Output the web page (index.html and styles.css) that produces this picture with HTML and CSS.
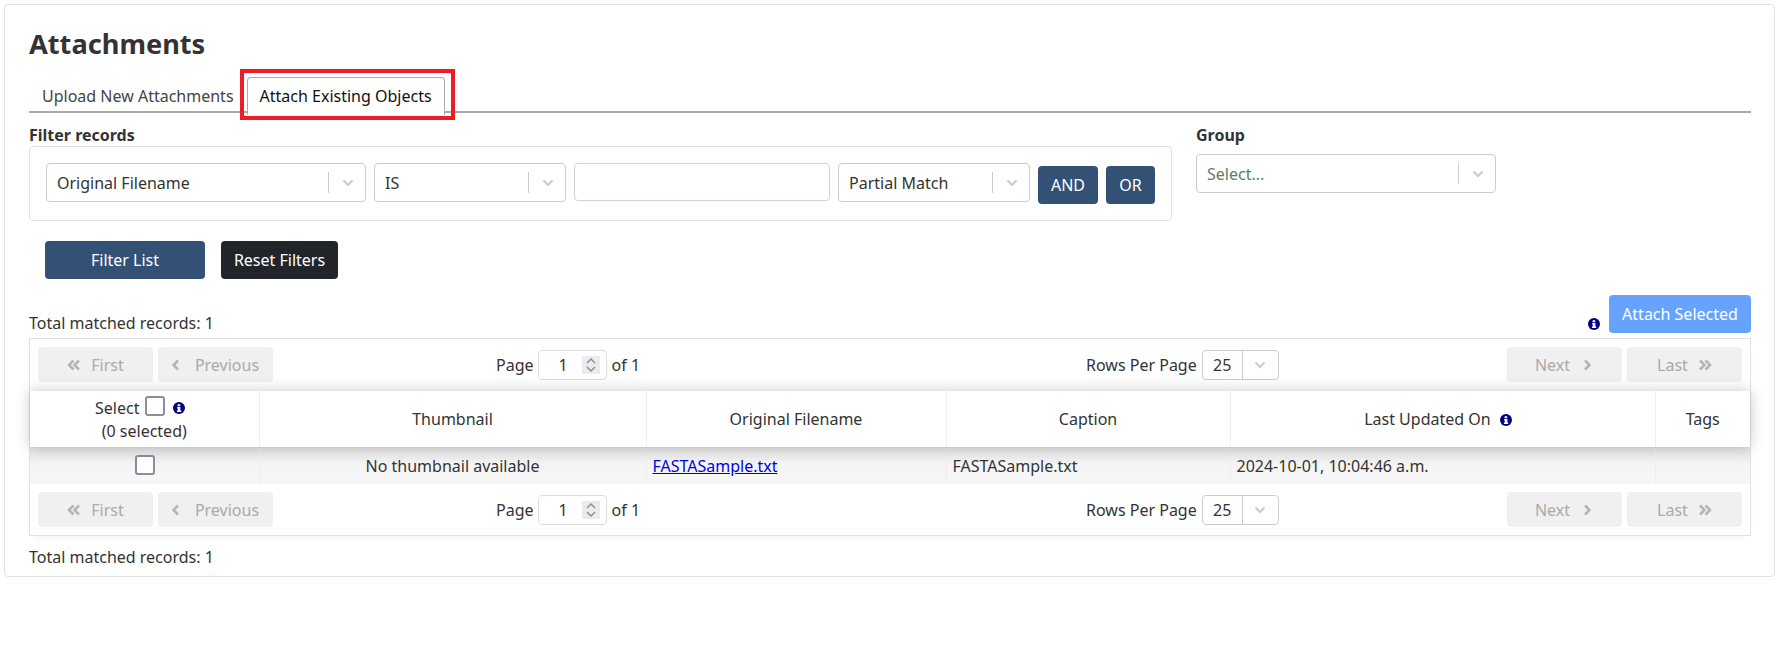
FILE: index.html
```html
<!DOCTYPE html>
<html lang="en">
<head>
  <meta charset="UTF-8">
  <meta name="viewport" content="width=device-width, initial-scale=1.0">
  <title>Attachments</title>
  <link rel="stylesheet" href="styles.css">
</head>
<body>
  <svg class="sprites" width="0" height="0">
    <symbol id="info" viewBox="0 0 12 12">
      <circle cx="6" cy="6" r="6" fill="#000080"/>
      <path d="M4.600 2.200h2.600v2H4.600zM4.200 5h3.200v3.400h.8V10H3.900V8.400h.9V6.600h-.6z" fill="#fff"/>
    </symbol>
    <symbol id="chev-down" viewBox="0 0 12 8">
      <path d="M1.500 1.500 6 6l4.500-4.500" fill="none" stroke="#ccc" stroke-width="2.200"/>
    </symbol>
    <symbol id="double-left" viewBox="0 0 14 12">
      <path d="M6.500 1.500 2 6l4.500 4.500M12 1.500 7.500 6l4.500 4.500" fill="none" stroke="currentColor" stroke-width="2.500"/>
    </symbol>
    <symbol id="double-right" viewBox="0 0 14 12">
      <path d="M2 1.500 6.500 6 2 10.500M7.500 1.500 12 6l-4.500 4.500" fill="none" stroke="currentColor" stroke-width="2.500"/>
    </symbol>
    <symbol id="single-left" viewBox="0 0 8 12">
      <path d="M6 1.500 1.500 6 6 10.500" fill="none" stroke="currentColor" stroke-width="2.500"/>
    </symbol>
    <symbol id="single-right" viewBox="0 0 8 12">
      <path d="M2 1.500 6.500 6 2 10.500" fill="none" stroke="currentColor" stroke-width="2.500"/>
    </symbol>
    <symbol id="spin" viewBox="0 0 18 18">
      <path d="M5 7l4-4 4 4M5 11l4 4 4-4" fill="none" stroke="#8a8a96" stroke-width="1.400"/>
    </symbol>
  </svg>

  <div class="card">
    <h1>Attachments</h1>

    <div class="tabs">
      <a class="tab">Upload New Attachments</a>
      <a class="tab active">Attach Existing Objects<span class="highlight"></span></a>
    </div>

    <div class="filter-row">
      <div class="filter-col">
        <label class="field-label">Filter records</label>
        <div class="filter-box">
          <div class="select sel-field"><span class="value">Original Filename</span><span class="sep"></span><svg class="chev"><use href="#chev-down"/></svg></div>
          <div class="select sel-op"><span class="value">IS</span><span class="sep"></span><svg class="chev"><use href="#chev-down"/></svg></div>
          <input class="text-input" type="text">
          <div class="select sel-op"><span class="value">Partial Match</span><span class="sep"></span><svg class="chev"><use href="#chev-down"/></svg></div>
          <button class="btn btn-blue btn-and">AND</button>
          <button class="btn btn-blue btn-or">OR</button>
        </div>
      </div>
      <div class="group-col">
        <label class="field-label">Group</label>
        <div class="select sel-group"><span class="value placeholder">Select...</span><span class="sep"></span><svg class="chev"><use href="#chev-down"/></svg></div>
      </div>
    </div>

    <div class="filter-actions">
      <button class="btn btn-blue btn-filter">Filter List</button>
      <button class="btn btn-dark">Reset Filters</button>
    </div>

    <div class="summary-row">
      <span>Total matched records: 1</span>
      <div class="attach-wrap">
        <svg class="info"><use href="#info"/></svg>
        <button class="btn btn-attach">Attach Selected</button>
      </div>
    </div>

    <div class="table-box">
      <div class="pager">
        <div class="pager-side">
          <button class="page-btn"><svg class="pg-ico wide"><use href="#double-left"/></svg>First</button>
          <button class="page-btn"><svg class="pg-ico single"><use href="#single-left"/></svg>Previous</button>
        </div>
        <div class="pager-center">
          <span class="page-info">Page <span class="page-input"><input type="text" value="1"><svg class="spin"><use href="#spin"/></svg></span> of 1</span>
          <span class="rows-info">Rows Per Page
            <span class="rows-select"><span class="rows-val">25</span><span class="rows-arrow"><svg class="chev"><use href="#chev-down"/></svg></span></span>
          </span>
        </div>
        <div class="pager-side">
          <button class="page-btn">Next<svg class="pg-ico after single"><use href="#single-right"/></svg></button>
          <button class="page-btn">Last<svg class="pg-ico wide after"><use href="#double-right"/></svg></button>
        </div>
      </div>

      <table class="records">
        <thead>
          <tr>
            <th class="col-select">
              <div class="select-head">Select <input class="check check-head" type="checkbox"> <svg class="info"><use href="#info"/></svg></div>
              <div>(0 selected)</div>
            </th>
            <th class="col-thumb">Thumbnail</th>
            <th class="col-file">Original Filename</th>
            <th class="col-caption">Caption</th>
            <th class="col-updated">Last Updated On <svg class="info info-th"><use href="#info"/></svg></th>
            <th class="col-tags">Tags</th>
          </tr>
        </thead>
        <tbody>
          <tr>
            <td class="center"><input class="check check-row" type="checkbox"></td>
            <td class="center">No thumbnail available</td>
            <td><a href="#">FASTASample.txt</a></td>
            <td>FASTASample.txt</td>
            <td>2024-10-01, 10:04:46 a.m.</td>
            <td></td>
          </tr>
        </tbody>
      </table>

      <div class="pager pager-bottom">
        <div class="pager-side">
          <button class="page-btn"><svg class="pg-ico wide"><use href="#double-left"/></svg>First</button>
          <button class="page-btn"><svg class="pg-ico single"><use href="#single-left"/></svg>Previous</button>
        </div>
        <div class="pager-center">
          <span class="page-info">Page <span class="page-input"><input type="text" value="1"><svg class="spin"><use href="#spin"/></svg></span> of 1</span>
          <span class="rows-info">Rows Per Page
            <span class="rows-select"><span class="rows-val">25</span><span class="rows-arrow"><svg class="chev"><use href="#chev-down"/></svg></span></span>
          </span>
        </div>
        <div class="pager-side">
          <button class="page-btn">Next<svg class="pg-ico after single"><use href="#single-right"/></svg></button>
          <button class="page-btn">Last<svg class="pg-ico wide after"><use href="#double-right"/></svg></button>
        </div>
      </div>
    </div>

    <div class="summary-bottom">Total matched records: 1</div>
  </div>
</body>
</html>
```

FILE: styles.css
```css
* { box-sizing: border-box; }
body { font-family: "Noto Sans", sans-serif; font-size: 16px; line-height: 1.5; color: #333; background: #fff; margin: 0; padding: 4px 8px 0 4px; }
.sprites { position: absolute; }
.card { border: 1px solid #dee2e6; border-radius: 4px; padding: 20px 23px 7px 24px; height: 573px; }
h1 { font-size: 27.2px; font-weight: 700; line-height: 38px; margin: 0 0 10px; }

.tabs { display: flex; border-bottom: 2px solid #aaa; height: 40px; padding-top: 4px; }
.tab { position: relative; padding: 6px 12px; height: 36px; color: #444; border: 1px solid transparent; white-space: nowrap; }
.tab.active { color: #111; background: #fff; border-color: #aaa; border-bottom-color: #fff; border-radius: 4px 4px 0 0; height: 38px; }
.highlight { position: absolute; left: -8px; right: -11px; top: -9px; height: 51px; border: 4px solid #ee1c25; }

.filter-row { display: flex; margin-top: 11px; }
.filter-col { width: 1143px; }
.group-col { margin-left: 24px; }
.field-label { display: block; font-weight: 700; line-height: 22px; }
.filter-box { display: flex; align-items: flex-start; gap: 8px; height: 75px; padding: 16px 16px; border: 1px solid #dee2e6; border-radius: 4px; }

.select { display: flex; align-items: center; height: 39px; border: 1px solid #ccc; border-radius: 4px; padding-left: 10px; background: #fff; }
.select .value { flex: 1; }
.select .placeholder { color: #5f7a6a; }
.sep { width: 1px; height: 21px; background: #ccc; }
.chev { width: 12px; height: 8px; margin: 0 11px 0 13px; }
.sel-field { width: 320px; }
.sel-op { width: 192px; }
.sel-group { width: 300px; margin-top: 8px; }
.text-input { width: 256px; height: 38px; border: 1px solid #ced4da; border-radius: 4px; }

.btn { font-family: inherit; font-size: 16px; color: #fff; border: 1px solid transparent; border-radius: 4px; height: 38px; padding: 0; cursor: pointer; }
.btn-blue { background: #335175; }
.btn-dark { background: #212529; width: 117px; }
.btn-and { width: 60px; margin-top: 3px; }
.btn-or { width: 49px; margin-top: 3px; }
.btn-filter { width: 160px; }
.btn-attach { background: #66a3ff; width: 142px; }

.filter-actions { display: flex; gap: 16px; margin-top: 20px; padding-left: 16px; }

.summary-row { display: flex; justify-content: space-between; margin-top: 16px; height: 43px; }
.summary-row > span { margin-top: 16px; }
.attach-wrap { display: flex; align-items: flex-start; gap: 9px; }
.attach-wrap .info { align-self: flex-end; margin-bottom: 8px; }
.info { width: 12px; height: 12px; vertical-align: -1px; }
.info-th { margin-left: 5px; }

.table-box { border: 1px solid #dee2e6; box-shadow: 0 6px 8px -6px rgba(0, 0, 0, .08); }
.pager { display: flex; justify-content: space-between; align-items: center; height: 52px; padding: 0 8px 1px 8px; }
.pager-bottom { height: 51px; padding-bottom: 0; }
.pager-side { display: flex; gap: 5px; }
.pager-center { flex: 1; display: flex; align-items: center; padding-left: 223px; }
.page-info { display: flex; align-items: center; gap: 4px; }
.page-input { margin-right: 1px; }
.rows-info { display: flex; align-items: center; gap: 5px; margin-left: 446px; }
.page-btn { display: flex; align-items: center; justify-content: center; width: 115px; height: 35px; font-family: inherit; font-size: 16px; color: #aaa; background: #f0f0f0; border: none; border-radius: 4px; }
.pg-ico { width: 8px; height: 12px; margin-right: 10px; color: #b4b4b4; }
.pg-ico.wide { width: 14px; }
.pg-ico.single { margin-right: 15px; }
.pg-ico.after { margin-right: 0; margin-left: 10px; }
.pg-ico.after.single { margin-left: 13px; margin-right: 3px; }
.page-input { display: flex; align-items: center; width: 69px; height: 30px; border: 1px solid #ddd; border-radius: 4px; padding-right: 6px; }
.page-input input { flex: 1; min-width: 0; width: 40px; height: 26px; font-family: inherit; font-size: 16px; color: #333; text-align: center; border: none; padding: 0 0 0 6px; }
.spin { width: 18px; height: 18px; background: #e9ebef; }
.rows-select { display: flex; height: 30px; width: 77px; border: 1px solid #ccc; border-radius: 4px; }
.rows-val { width: 40px; text-align: center; border-right: 1px solid #ccc; line-height: 29px; }
.rows-arrow { flex: 1; display: flex; align-items: center; }
.rows-arrow .chev { margin: 0 auto; }

.records { width: 100%; table-layout: fixed; border-collapse: collapse; }
.records th { font-weight: 400; height: 56px; padding: 0; text-align: center; border-right: 1px solid #eee; background: #fff; }
.records thead tr { box-shadow: 0 0 14px rgba(0, 0, 0, .22); position: relative; }
.records th:last-child, .records td:last-child { border-right: none; }
.records td { height: 37px; padding: 0 6px; border-right: 1px solid #eee; background: linear-gradient(#e3e3e3, #f5f5f5 50%, #f6f6f6); }
.center { text-align: center; }
.records a { color: #0000ee; text-decoration: underline; }
.col-select { width: 229px; }
.col-thumb { width: 387px; }
.col-file { width: 300px; }
.col-caption { width: 284px; }
.records .col-updated { width: 425px; padding-right: 9px; }
.select-head { display: flex; align-items: center; justify-content: center; gap: 6px; height: 24px; padding: 1px 8px 0 0; }
.check { appearance: none; width: 20px; height: 20px; margin: 0; border: 2px solid #8d8d9f; border-radius: 3px; background: #fff; }
.check-head { margin: -3px 2px 0 0; }
.check-row { display: block; margin: -2px 0 0 99px; }

.summary-bottom { margin-top: 9px; }
```
